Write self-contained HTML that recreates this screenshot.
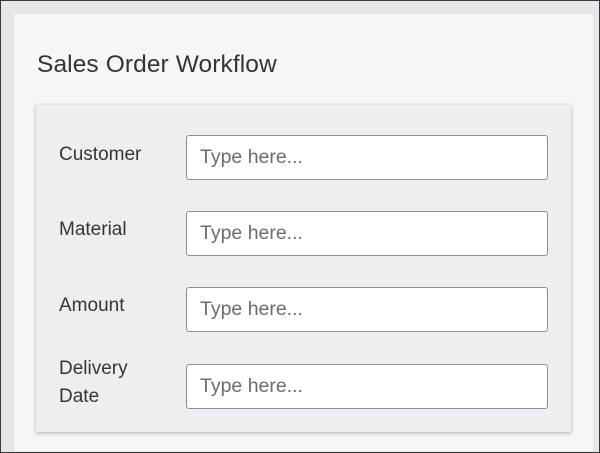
<!DOCTYPE html>
<html><head><style>
*{margin:0;padding:0;box-sizing:border-box}
body{width:600px;height:453px;overflow:hidden;font-family:"Liberation Sans",Arial,sans-serif}
.frame{position:absolute;left:0;top:0;width:600px;height:453px;border:1px solid #3a3a3a;background:#e5e6e9}
.panel{position:absolute;left:14px;top:14px;width:579px;height:437px;background:#f6f6f6}
h1{position:absolute;left:37px;top:51px;font-size:24.5px;font-weight:normal;color:#32363a;letter-spacing:0.1px}
.card{position:absolute;left:36px;top:105px;width:535px;height:327px;background:#edeef0;box-shadow:0 1px 4px rgba(0,0,0,.3)}
.lbl{position:absolute;left:59px;font-size:19px;color:#32363a;line-height:28px}
.in{position:absolute;left:186px;width:362px;height:45px;background:#fff;border:1px solid #89919a;border-radius:3px;font-size:19.5px;color:#6a6d70;padding:10px 0 0 13px}
</style></head><body>
<div class="frame"></div>
<div class="panel"></div>
<h1>Sales Order Workflow</h1>
<div class="card"></div>
<div class="lbl" style="top:141px">Customer</div>
<div class="in" style="top:135px">Type here...</div>
<div class="lbl" style="top:216px">Material</div>
<div class="in" style="top:211px">Type here...</div>
<div class="lbl" style="top:292px">Amount</div>
<div class="in" style="top:287px">Type here...</div>
<div class="lbl" style="top:355px">Delivery<br>Date</div>
<div class="in" style="top:364px">Type here...</div>
</body></html>
